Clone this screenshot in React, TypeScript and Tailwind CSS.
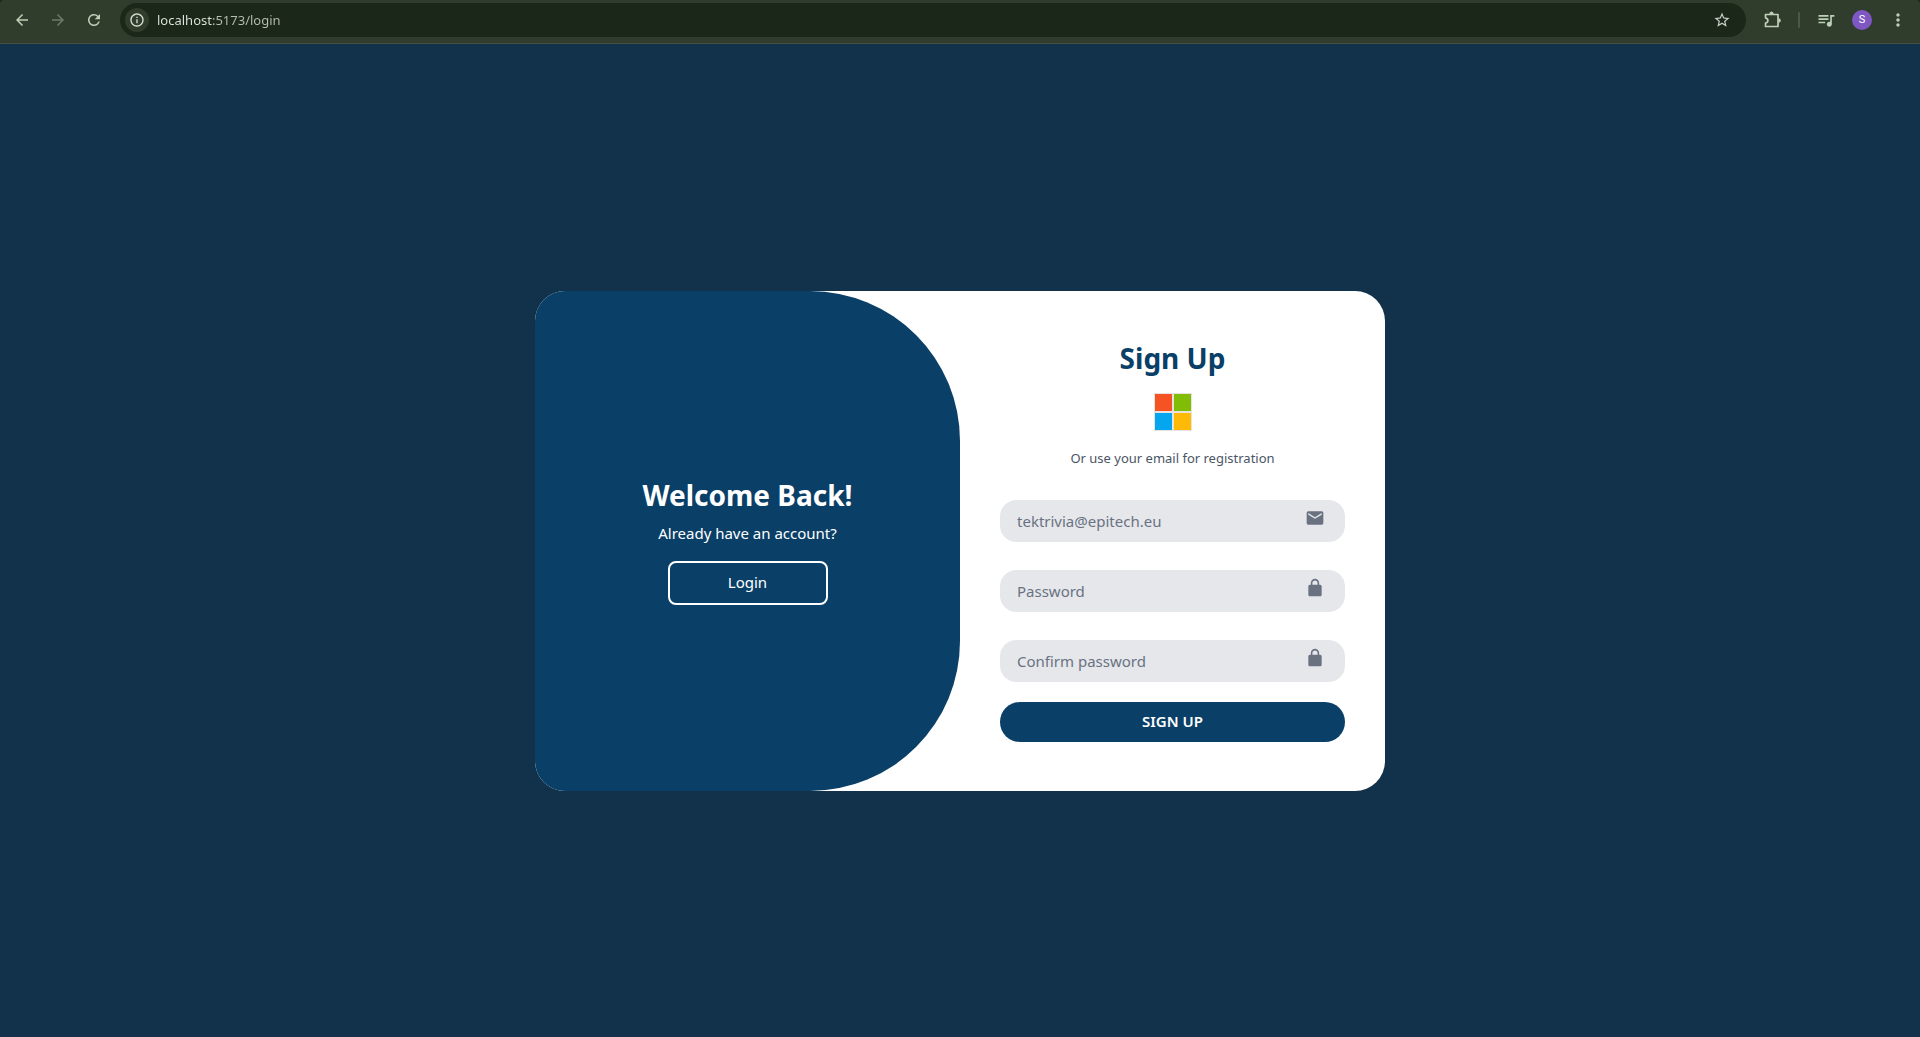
import type { ComponentType, ReactNode } from "react";
import {
  MdArrowBack,
  MdArrowForward,
  MdEmail,
  MdMoreVert,
  MdOutlineInfo,
  MdQueueMusic,
  MdRefresh,
  MdStarBorder,
} from "react-icons/md";

function LockIcon({ className }: { className?: string }) {
  return (
    <svg viewBox="0 0 24 24" fill="currentColor" className={className} aria-hidden="true">
      <path
        fillRule="evenodd"
        d="M18 8h-1V6c0-2.76-2.24-5-5-5S7 3.24 7 6v2H6c-1.1 0-2 .9-2 2v10c0 1.1.9 2 2 2h12c1.1 0 2-.9 2-2V10c0-1.1-.9-2-2-2zM8.9 6c0-1.71 1.39-3.1 3.1-3.1s3.1 1.39 3.1 3.1v2H8.9V6z"
      />
    </svg>
  );
}

function PuzzleIcon() {
  return (
    <svg viewBox="0 0 20 20" className="size-5" fill="none" stroke="currentColor" aria-hidden="true">
      <path
        strokeWidth="1.7"
        strokeLinejoin="round"
        d="M3.500 4.500h12.500v12H3.500v-3.300c1.500-.3 2.400-1.300 2.400-2.700S5 8.100 3.500 7.800z"
      />
      <path fill="currentColor" stroke="none" d="M7.300 4a2.200 2.600 0 0 1 4.400 0zM16.400 8.300a2.400 2.200 0 0 1 0 4.400z" />
    </svg>
  );
}

function MicrosoftLogo() {
  return (
    <svg viewBox="0 0 38 38" className="size-[38px]" shapeRendering="crispEdges" aria-hidden="true">
      <path fill="#e8e3dd" d="M0 0h38v38H0z" />
      <path fill="#f65325" d="M1 1h17v17H1z" />
      <path fill="#81bc06" d="M20 1h17v17H20z" />
      <path fill="#05a6f0" d="M1 20h17v17H1z" />
      <path fill="#ffba08" d="M20 20h17v17H20z" />
    </svg>
  );
}

function ToolbarButton({ label, children }: { label: string; children: ReactNode }) {
  return (
    <button type="button" aria-label={label} className="flex size-9 items-center justify-center">
      {children}
    </button>
  );
}

function BrowserBar() {
  return (
    <div className="bg-[#1a2518]">
      <header className="flex h-11 items-start rounded-t-sm border-b border-[#454f43] bg-[#303d2d] px-1 pt-0.5 text-[#bdd0b6]">
        <nav className="flex">
          <ToolbarButton label="Back">
            <MdArrowBack className="size-[18px]" />
          </ToolbarButton>
          <ToolbarButton label="Forward">
            <MdArrowForward className="size-[18px] text-[#6d7a69]" />
          </ToolbarButton>
          <ToolbarButton label="Reload">
            <MdRefresh className="size-[18px]" />
          </ToolbarButton>
        </nav>
        <div className="mt-px ml-2 flex h-[34px] flex-1 items-center rounded-full bg-[#1b2819] pr-[15px] pl-[5px]">
          <button
            type="button"
            aria-label="Site information"
            className="flex size-6 items-center justify-center rounded-full bg-[#303d2d] text-[#d9e0d5]"
          >
            <MdOutlineInfo className="size-4" />
          </button>
          <input
            aria-label="Address"
            defaultValue="localhost:5173/login"
            className="ml-2 min-w-0 flex-1 bg-linear-to-r from-[#dfe6db] from-[56px] to-[#b6bfb2] to-[56px] bg-clip-text text-[13px] leading-6 text-transparent outline-none"
          />
          <button type="button" aria-label="Bookmark" className="text-[#c9d0c6]">
            <MdStarBorder className="size-[18px]" />
          </button>
        </div>
        <div className="ml-2 flex h-9 items-center">
          <ToolbarButton label="Extensions">
            <PuzzleIcon />
          </ToolbarButton>
          <span className="mx-2 h-4 w-0.5 rounded-full bg-[#4a5b45]" />
          <ToolbarButton label="Media">
            <MdQueueMusic className="size-5" />
          </ToolbarButton>
          <ToolbarButton label="Profile">
            <span className="flex size-5 items-center justify-center rounded-full bg-[#7e57c2] font-['Roboto',sans-serif] text-[11px] text-white">
              S
            </span>
          </ToolbarButton>
          <ToolbarButton label="Menu">
            <MdMoreVert className="size-5" />
          </ToolbarButton>
        </div>
      </header>
    </div>
  );
}

type FieldProps = {
  type: string;
  placeholder: string;
  icon: ComponentType<{ className?: string }>;
};

function Field({ type, placeholder, icon: Icon }: FieldProps) {
  return (
    <div className="relative">
      <input
        type={type}
        placeholder={placeholder}
        aria-label={placeholder}
        className="h-[42px] w-full rounded-2xl border border-gray-200 bg-gray-200 pr-12 pl-4 text-[15px] text-gray-700 outline-none placeholder:text-gray-500"
      />
      <Icon className="absolute top-2 right-5 size-5 text-gray-500" />
    </div>
  );
}

export default function App() {
  return (
    <div className="flex min-h-screen flex-col bg-[#12324b] font-['Noto_Sans',sans-serif]">
      <BrowserBar />
      <main className="flex flex-1 items-center justify-center">
        <div className="grid min-h-[500px] w-full max-w-[850px] grid-cols-2 overflow-hidden rounded-[30px] bg-white">
          <section className="flex flex-col items-center justify-center rounded-r-[150px] bg-[#0a3f68] text-white">
            <h1 className="text-[28px] leading-9 font-bold">Welcome Back!</h1>
            <p className="mt-2 text-[15px] leading-6">Already have an account?</p>
            <button type="button" className="mt-4 h-11 w-40 rounded-lg border-2 border-white text-[15px]">
              Login
            </button>
          </section>
          <form className="flex flex-col justify-center px-10">
            <h2 className="text-center text-[28px] leading-9 font-bold text-[#0a3f68]">Sign Up</h2>
            <button
              type="button"
              aria-label="Sign up with Microsoft"
              className="mt-4 flex h-10 items-center justify-center self-center"
            >
              <MicrosoftLogo />
            </button>
            <p className="mt-4 text-center text-[13px] leading-5 text-gray-600">Or use your email for registration</p>
            <div className="mt-8 flex flex-col gap-7">
              <Field type="email" placeholder="tektrivia@epitech.eu" icon={MdEmail} />
              <Field type="password" placeholder="Password" icon={LockIcon} />
              <Field type="password" placeholder="Confirm password" icon={LockIcon} />
            </div>
            <button
              type="submit"
              className="mt-5 h-10 rounded-full bg-[#0a3f68] text-[15px] font-semibold text-white"
            >
              SIGN UP
            </button>
          </form>
        </div>
      </main>
    </div>
  );
}
